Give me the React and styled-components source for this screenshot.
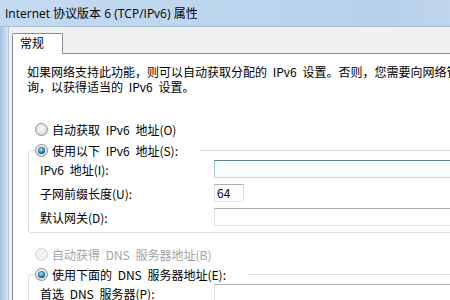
import React from "react";
import styled, { createGlobalStyle } from "styled-components";

const GlobalStyle = createGlobalStyle`
  html, body {
    margin: 0;
    padding: 0;
    width: 450px;
    height: 300px;
    overflow: hidden;
    background: #f0f0f0;
  }
`;

const Window = styled.div`
  width: 640px;
  height: 300px;
  display: flex;
  flex-direction: column;
  font-family: "Noto Sans CJK SC", sans-serif;
  font-size: 12px;
  color: #000;
`;

const TitleBar = styled.div`
  height: 26px;
  flex: none;
  display: flex;
  align-items: center;
  padding-left: 5px;
  border-bottom: 1px solid #a9bdd3;
  background: linear-gradient(90deg, #c4daf1 0%, #bcd4ed 40%, #b8d0ea 60%, #cadef2 85%, #bdd4ec 100%);
  font-family: "Open Sans", "Noto Sans CJK SC", sans-serif;
  font-size: 12px;
`;

const Frame = styled.div`
  flex: 1;
  display: flex;
  min-height: 0;
`;

const SideBorder = styled.div`
  width: 8px;
  flex: none;
  background: linear-gradient(90deg, #a5c0dd 0%, #bcd2ea 50%, #d9e6f3 100%);
  border-right: 1px solid #b7c4d1;
`;

const Client = styled.div`
  flex: 1;
  display: flex;
  flex-direction: column;
  padding: 6px 0 0 3px;
  background: #f0f0f0;
`;

const TabStrip = styled.div`
  display: flex;
  flex: none;
`;

const Tab = styled.div`
  position: relative;
  z-index: 1;
  box-sizing: border-box;
  width: 51px;
  height: 21px;
  margin-bottom: -1px;
  padding-left: 7px;
  border: 1px solid #898c95;
  border-bottom: none;
  border-radius: 2px 2px 0 0;
  background: #fff;
  line-height: 19px;
  font-family: "Open Sans", "Noto Sans CJK SC", sans-serif;
`;

const Panel = styled.div`
  flex: 1;
  display: flex;
  flex-direction: column;
  align-items: flex-start;
  padding: 10px 0 0 14px;
  border: 1px solid #898c95;
  background: #fff;
`;

const Description = styled.p`
  margin: 0;
  line-height: 15px;
  white-space: nowrap;
  word-spacing: 3px;
`;

const RadioRow = styled.label`
  display: flex;
  align-items: center;
  gap: 4px;
  height: 17px;
  white-space: nowrap;
  word-spacing: 3px;
  color: ${p => (p.$disabled ? "#a3a3a3" : "#000")};
  margin: ${p => p.$margin || "0"};
`;

const RadioDot = styled.span`
  box-sizing: border-box;
  width: 13px;
  height: 13px;
  flex: none;
  border-radius: 50%;
  display: inline-flex;
  align-items: center;
  justify-content: center;
  border: 1px solid ${p => (p.$disabled ? "#cfd1d3" : "#8d9194")};
  background: ${p =>
    p.$disabled
      ? "#f3f3f3"
      : "radial-gradient(circle at 50% 40%, #fdfdfd 0%, #e9e9e9 45%, #c8cacc 100%)"};

  &::after {
    content: "";
    display: ${p => (p.$checked ? "block" : "none")};
    width: 7px;
    height: 7px;
    border-radius: 50%;
    background: radial-gradient(circle at 45% 40%, #b7ecff 0%, #4a9ccc 35%, #1a5a86 65%, #0b3350 100%);
  }
`;

const GroupBox = styled.fieldset`
  box-sizing: border-box;
  width: 600px;
  margin: ${p => p.$margin || "0"};
  padding: 0 0 6px 6px;
  border: 1px solid #d5dfe5;
  border-radius: 3px;
`;

const Legend = styled.legend`
  box-sizing: border-box;
  width: ${p => p.$width}px;
  padding: 0;
`;

const Fields = styled.div`
  display: grid;
  grid-template-columns: 174px auto;
  row-gap: 6px;
  align-items: center;
  padding: 1px 0 0 5px;
  word-spacing: 3px;
`;

const FieldLabel = styled.span`
  white-space: nowrap;
`;

const TextBox = styled.div`
  box-sizing: border-box;
  width: ${p => p.$width || "400px"};
  height: 18px;
  padding-left: 2px;
  line-height: 16px;
  border: 1px solid ${p => (p.$active ? "#a9c3cf" : "#dbdfe6")};
  border-top-color: ${p => (p.$active ? "#5d7f91" : "#abadb3")};
  border-bottom-color: ${p => (p.$active ? "#c9dde4" : "#e3e9ef")};
  background: ${p => (p.$active ? "#f8fcfd" : "#fff")};
`;

function Radio({ checked, disabled, children, margin }) {
  return (
    <RadioRow $disabled={disabled} $margin={margin}>
      <RadioDot $checked={checked} $disabled={disabled} />
      {children}
    </RadioRow>
  );
}

export default function App() {
  return (
    <>
      <GlobalStyle />
      <Window>
        <TitleBar>Internet 协议版本 6 (TCP/IPv6) 属性</TitleBar>
        <Frame>
          <SideBorder />
          <Client>
            <TabStrip>
              <Tab>常规</Tab>
            </TabStrip>
            <Panel>
              <Description>
                如果网络支持此功能，则可以自动获取分配的 IPv6 设置。否则，您需要向网络管理员咨
                <br />
                询，以获得适当的 IPv6 设置。
              </Description>

              <Radio margin="27px 0 0 8px">自动获取 IPv6 地址(O)</Radio>

              <GroupBox $margin="4px 0 0 1px">
                <Legend $width={165}>
                  <Radio checked>使用以下 IPv6 地址(S):</Radio>
                </Legend>
                <Fields>
                  <FieldLabel>IPv6 地址(I):</FieldLabel>
                  <TextBox $active />
                  <FieldLabel>子网前缀长度(U):</FieldLabel>
                  <TextBox $width="30px">64</TextBox>
                  <FieldLabel>默认网关(D):</FieldLabel>
                  <TextBox />
                </Fields>
              </GroupBox>

              <Radio disabled margin="13px 0 0 8px">自动获得 DNS 服务器地址(B)</Radio>

              <GroupBox $margin="3px 0 0 1px">
                <Legend $width={213}>
                  <Radio checked>使用下面的 DNS 服务器地址(E):</Radio>
                </Legend>
                <Fields>
                  <FieldLabel>首选 DNS 服务器(P):</FieldLabel>
                  <TextBox />
                </Fields>
              </GroupBox>
            </Panel>
          </Client>
        </Frame>
      </Window>
    </>
  );
}
